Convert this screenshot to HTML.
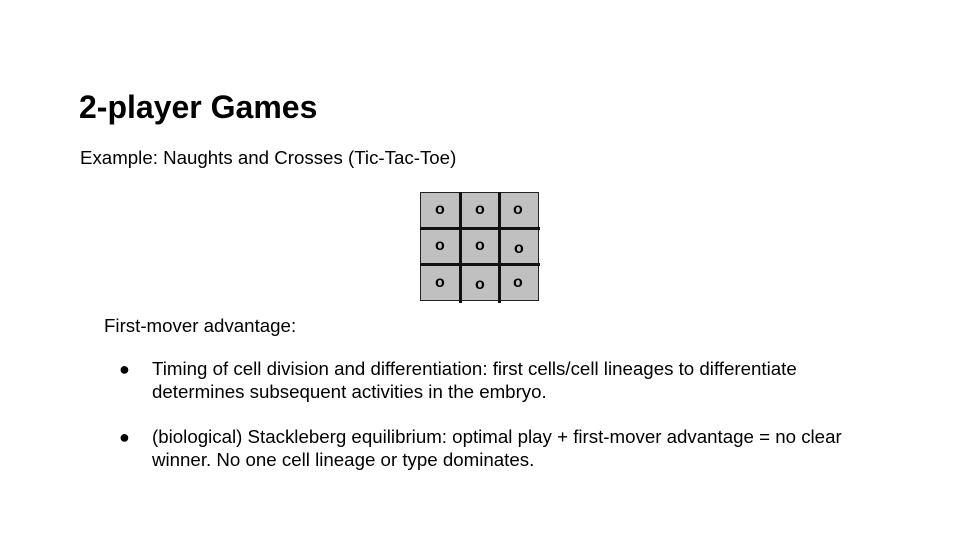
<!DOCTYPE html>
<html><head><style>
body{margin:0;width:960px;height:540px;background:#fff;font-family:"Liberation Sans",sans-serif;position:relative;overflow:hidden}
.t{position:absolute;color:#000;white-space:nowrap}
.o{position:absolute;font-size:16px;font-weight:bold;line-height:16px}
.l{position:absolute;background:#111}
</style></head><body>
<div class="t" style="left:79px;top:89px;font-size:32px;font-weight:bold">2-player Games</div>
<div class="t" style="left:80px;top:147px;font-size:18.7px">Example: Naughts and Crosses (Tic-Tac-Toe)</div>
<div style="position:absolute;left:420px;top:192px;width:117px;height:107px;border:1px solid #222;background:#c0c0c0"></div>
<div class="l" style="left:459px;top:192px;width:3px;height:111px"></div>
<div class="l" style="left:498px;top:192px;width:3px;height:111px"></div>
<div class="l" style="left:420px;top:227px;width:120px;height:3px"></div>
<div class="l" style="left:420px;top:263px;width:120px;height:3px"></div>
<div class="o" style="left:435px;top:202px">o</div>
<div class="o" style="left:475px;top:202px">o</div>
<div class="o" style="left:513px;top:202px">o</div>
<div class="o" style="left:435px;top:238px">o</div>
<div class="o" style="left:475px;top:238px">o</div>
<div class="o" style="left:514px;top:241px">o</div>
<div class="o" style="left:435px;top:275px">o</div>
<div class="o" style="left:475px;top:277px">o</div>
<div class="o" style="left:513px;top:275px">o</div>
<div class="t" style="left:104px;top:315px;font-size:18.7px">First-mover advantage:</div>
<div class="t" style="left:119px;top:359px;font-size:18px">●</div>
<div class="t" style="left:152px;top:358px;font-size:18.7px;line-height:22.5px">Timing of cell division and differentiation: first cells/cell lineages to differentiate<br>determines subsequent activities in the embryo.</div>
<div class="t" style="left:119px;top:427px;font-size:18px">●</div>
<div class="t" style="left:152px;top:426px;font-size:18.7px;line-height:22.5px">(biological) Stackleberg equilibrium: optimal play + first-mover advantage = no clear<br>winner. No one cell lineage or type dominates.</div>
</body></html>
